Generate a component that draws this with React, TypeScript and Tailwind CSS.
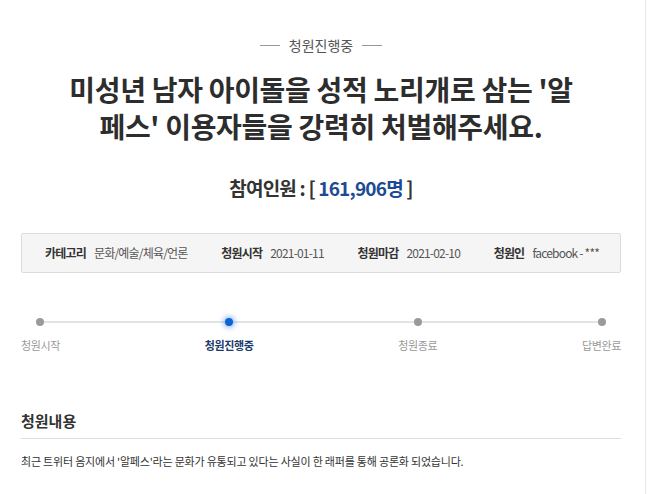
const info = [
  { label: "카테고리", value: "문화/예술/체육/언론" },
  { label: "청원시작", value: "2021-01-11" },
  { label: "청원마감", value: "2021-02-10" },
  { label: "청원인", value: "facebook - ***" },
];

const steps = [
  { name: "청원시작", active: false },
  { name: "청원진행중", active: true },
  { name: "청원종료", active: false },
  { name: "답변완료", active: false },
];

export default function App() {
  return (
    <div
      className="w-[646px] min-h-[494px] bg-white border-r border-[#e6e6e6] text-[#333]"
      style={{ fontFamily: '"Noto Sans CJK KR", "Noto Sans", sans-serif' }}
    >
      <div className="ml-[21px] w-[600px] pt-[35px]">
        {/* status */}
        <div className="flex items-center justify-center gap-[9px] h-5 text-[14px] leading-5 text-[#555]">
          <span className="w-[20px] h-px bg-[#999]" />
          <span>청원진행중</span>
          <span className="w-[20px] h-px bg-[#999]" />
        </div>

        <h1 className="mt-[16px] text-center text-[28px] leading-[37px] font-bold tracking-[-0.3px] text-[#2d2d2d]">
          미성년 남자 아이돌을 성적 노리개로 삼는 '알
          <br />
          페스' 이용자들을 강력히 처벌해주세요.
        </h1>

        <div className="mt-[29px] text-center text-[19px] leading-[28px] font-bold tracking-[-0.8px] text-[#333]">
          참여인원 : [ <span className="text-[#1c4b94]">161,906명</span> ]
        </div>

        {/* meta box */}
        <div className="mt-[31px] h-[40px] flex items-center justify-between pl-[23px] pr-[21px] bg-[#f5f5f5] border border-[#dcdcdc] rounded-[2px] text-[12px] tracking-[-0.8px]">
          {info.map((item) => (
            <div key={item.label} className="flex items-center gap-[8px] whitespace-nowrap">
              <span className="font-bold text-[#333]">{item.label}</span>
              <span className="text-[#555]">{item.value}</span>
            </div>
          ))}
        </div>

        {/* progress */}
        <div className="relative mt-[45px]">
          <div className="absolute left-[20px] right-[20px] top-[3px] h-[2px] bg-[#e3e3e3]" />
          <div className="relative flex justify-between">
            {steps.map((s) => (
              <div key={s.name} className="flex flex-col items-center">
                {s.active ? (
                  <span className="w-[8px] h-[8px] rounded-full bg-[#0c63d6] shadow-[0_0_5px_2px_rgba(40,120,230,0.45)]" />
                ) : (
                  <span className="w-[8px] h-[8px] rounded-full bg-[#9a9a9a]" />
                )}
                <span
                  className={
                    s.active
                      ? "mt-[10px] text-[11px] leading-[18px] tracking-[-0.4px] font-bold text-[#1b3a6b]"
                      : "mt-[10px] text-[11px] leading-[18px] tracking-[-0.4px] text-[#999]"
                  }
                >
                  {s.name}
                </span>
              </div>
            ))}
          </div>
        </div>

        {/* content */}
        <h2 className="mt-[55px] pb-[5px] border-b border-[#dcdcdc] text-[15px] leading-[24px] font-bold text-[#333]">
          청원내용
        </h2>
        <p className="mt-[13px] text-[11px] leading-[18px] tracking-[-0.2px] text-[#333]">
          최근 트위터 음지에서 '알페스'라는 문화가 유통되고 있다는 사실이 한 래퍼를 통해 공론화 되었습니다.
        </p>
      </div>
    </div>
  );
}
